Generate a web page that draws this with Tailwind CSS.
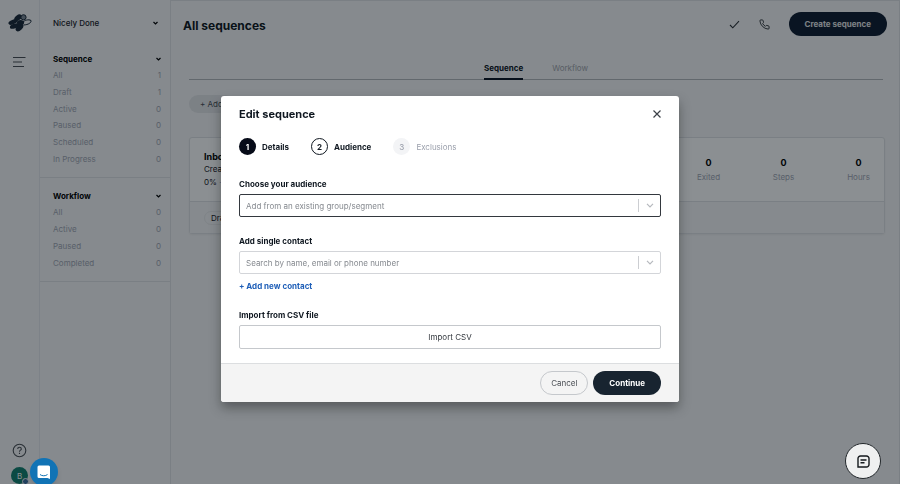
<!DOCTYPE html>
<html lang="en">
<head>
  <meta charset="UTF-8" />
  <meta name="viewport" content="width=device-width, initial-scale=1.0" />
  <title>All sequences</title>
  <script src="https://cdn.jsdelivr.net/npm/@tailwindcss/browser@4"></script>
</head>
<body class="bg-[#f6f6f7] font-['Inter',sans-serif] text-[8px] leading-3 text-[#1a2028]">

<div class="flex h-screen overflow-hidden">

  <!-- Icon rail -->
  <nav class="flex w-10 shrink-0 flex-col items-center border-r border-[#e6e8ec] pt-[13px]">
    <a href="#" aria-label="Home">
      <svg class="h-[19px] w-6" viewBox="0 0 24 19" fill="#1a2838">
        <ellipse cx="10" cy="4.800" rx="4.200" ry="2.600" transform="rotate(-38 10 4.800)" />
        <ellipse cx="5" cy="9" rx="4.800" ry="2.200" transform="rotate(-22 5 9)" />
        <ellipse cx="6.500" cy="13" rx="4.800" ry="2.300" transform="rotate(-20 6.500 13)" />
        <ellipse cx="11.500" cy="14.500" rx="4.600" ry="2.800" transform="rotate(-45 11.500 14.500)" />
        <ellipse cx="12.500" cy="9.500" rx="3.600" ry="2.600" />
        <circle cx="15.500" cy="4.300" r="2.600" fill="#7c8794" stroke="#1a2838" stroke-width="1" />
        <path d="M14.500 9.500c2-2.300 6-3.500 8.500-2 .6 2-2.500 4.300-7.500 4.500" fill="none" stroke="#1a2838" stroke-width="1" />
      </svg>
    </a>
    <button type="button" aria-label="Toggle menu" class="mt-6">
      <svg class="h-3 w-[13px]" viewBox="0 0 13 12" fill="none" stroke="#4b4f55" stroke-width="1.200">
        <path d="M0 1.500h12.500M0 6h9M0 10.500h11" />
      </svg>
    </button>
    <div class="mt-auto flex flex-col items-center gap-[9px]">
      <a href="#" aria-label="Help">
        <svg class="size-[15px]" viewBox="0 0 15 15" fill="none" stroke="#4b4f55" stroke-width="1.100">
          <circle cx="7.500" cy="7.500" r="6.300" />
          <path d="M5.700 6c0-1.100.8-1.800 1.800-1.800s1.800.7 1.800 1.700c0 1.300-1.800 1.300-1.800 2.800M7.500 9.800v1.200" />
        </svg>
      </a>
      <button type="button" class="relative size-[17px] rounded-full bg-[#14806f] text-[8px] text-white">B
        <span class="absolute -right-px -bottom-px size-[7px] rounded-full border border-[#f6f6f7] bg-[#3c6da0]"></span>
      </button>
    </div>
  </nav>

  <!-- Sidebar -->
  <aside class="w-[131px] shrink-0 border-r border-[#e0e2e6] text-[#a2a7b4]">
    <button type="button" class="flex w-full items-center justify-between pt-[17px] pr-3 pl-[13px] text-[#1a2028]">
      <span class="font-medium">Nicely Done</span>
      <svg class="h-1 w-[5px]" viewBox="0 0 5 4" fill="none" stroke="#000" stroke-width="1.200"><path d="M.5 1l2 2 2-2" /></svg>
    </button>

    <section class="mt-6 border-b border-[#e0e2e6] pr-[9px] pb-3 pl-[13px]">
      <button type="button" class="flex w-full items-center justify-between font-bold text-black">
        <span>Sequence</span>
        <svg class="h-1 w-[5px]" viewBox="0 0 5 4" fill="none" stroke="#000" stroke-width="1.200"><path d="M.5 1l2 2 2-2" /></svg>
      </button>
      <ul class="mt-1 flex h-24 flex-col justify-between">
        <li class="flex justify-between"><a href="#">All</a><span>1</span></li>
        <li class="flex justify-between"><a href="#">Draft</a><span>1</span></li>
        <li class="flex justify-between"><a href="#">Active</a><span>0</span></li>
        <li class="flex justify-between"><a href="#">Paused</a><span>0</span></li>
        <li class="flex justify-between"><a href="#">Scheduled</a><span>0</span></li>
        <li class="flex justify-between"><a href="#">In Progress</a><span>0</span></li>
      </ul>
    </section>

    <section class="border-b border-[#e0e2e6] pt-3 pr-[9px] pb-3 pl-[13px]">
      <button type="button" class="flex w-full items-center justify-between font-bold text-black">
        <span>Workflow</span>
        <svg class="h-1 w-[5px]" viewBox="0 0 5 4" fill="none" stroke="#000" stroke-width="1.200"><path d="M.5 1l2 2 2-2" /></svg>
      </button>
      <ul class="mt-1 flex h-[63px] flex-col justify-between">
        <li class="flex justify-between"><a href="#">All</a><span>0</span></li>
        <li class="flex justify-between"><a href="#">Active</a><span>0</span></li>
        <li class="flex justify-between"><a href="#">Paused</a><span>0</span></li>
        <li class="flex justify-between"><a href="#">Completed</a><span>0</span></li>
      </ul>
    </section>
  </aside>

  <!-- Page content -->
  <main class="min-w-0 flex-1 border-t border-r border-[#e0e2e6]">
    <header class="flex items-center justify-between pt-[11px] pr-3 pl-3">
      <h1 class="pt-1 text-[12px] leading-4 font-bold text-[#0f1720]">All sequences</h1>
      <div class="flex items-center">
        <button type="button" aria-label="Tasks">
          <svg class="size-[11px]" viewBox="0 0 11 11" fill="none" stroke="#2b3036" stroke-width="1.100"><path d="M1 6l2.800 2.800L10 2.200" /></svg>
        </button>
        <button type="button" aria-label="Call" class="ml-[19px]">
          <svg class="size-[11px]" viewBox="0 0 24 24" fill="none" stroke="#2b3036" stroke-width="2"><path d="M22 17v3a2 2 0 0 1-2.200 2A19.800 19.800 0 0 1 2 4.200 2 2 0 0 1 4 2h3a2 2 0 0 1 2 1.700c.1 1 .4 1.900.7 2.800a2 2 0 0 1-.5 2.100L8 9.900a16 16 0 0 0 6 6l1.300-1.300a2 2 0 0 1 2.100-.4c.9.300 1.900.5 2.800.6A2 2 0 0 1 22 17z" /></svg>
        </button>
        <button type="button" class="ml-[19px] h-6 rounded-full bg-[#101c30] px-4 font-bold text-[#e4e6e8]">Create sequence</button>
      </div>
    </header>

    <div class="mt-[26px] mr-4 ml-[18px] flex justify-center gap-[29px] border-b border-[#b4b7bb]">
      <a href="#" class="-mb-px border-b-2 border-[#0b1322] pb-1 font-bold text-[#0b1322]">Sequence</a>
      <a href="#" class="text-[#a2a5ac]">Workflow</a>
    </div>

    <div class="mt-[15px] mr-3.5 ml-[18px]">
      <button type="button" class="h-[18px] rounded-full bg-[#e4e5e8] px-[11px] text-[#4b4f55]">+ Add</button>

      <article class="mt-6 rounded-[3px] border border-[#e0e2e6] bg-white shadow-xs">
        <div class="flex h-16 items-center justify-between border-b border-[#e0e2e6] pl-3.5">
          <div>
            <h2 class="text-[9px] leading-[13px] font-bold text-black">Inbox</h2>
            <p class="leading-[13px]">Created</p>
            <p class="leading-[13px]">0% <span class="text-[#a2a7b4]">·</span></p>
          </div>
          <dl class="-mr-3 flex text-center text-[#a2a7b4]">
            <div class="flex w-[75px] flex-col-reverse"><dt>Exited</dt><dd class="mb-0.5 text-[9px] font-bold text-black">0</dd></div>
            <div class="flex w-[75px] flex-col-reverse"><dt>Steps</dt><dd class="mb-0.5 text-[9px] font-bold text-black">0</dd></div>
            <div class="flex w-[75px] flex-col-reverse"><dt>Hours</dt><dd class="mb-0.5 text-[9px] font-bold text-black">0</dd></div>
          </dl>
        </div>
        <div class="flex h-[31px] items-center bg-[#f6f6f7] pl-3.5">
          <span class="rounded-full border border-[#e8e9eb] px-1.5">Draft</span>
        </div>
      </article>
    </div>
  </main>
</div>

<!-- Edit sequence dialog -->
<div class="fixed inset-0 flex items-start justify-center bg-[#030b12]/46 pt-24">
  <form role="dialog" aria-labelledby="dialog-title" class="w-[458px] max-w-full overflow-hidden rounded-[3px] bg-white text-[#0f1720] shadow-[0_6px_12px_rgb(0_0_0/0.35)]">
    <div class="px-[18px] pt-2.5 pb-3.5">
      <div class="flex items-center justify-between">
        <h2 id="dialog-title" class="text-[11px] leading-4 font-bold">Edit sequence</h2>
        <button type="button" aria-label="Close" class="-mr-0.5 p-0.5">
          <svg class="size-2" viewBox="0 0 8 8" fill="none" stroke="#3c4147" stroke-width="1.200"><path d="M.5.5l7 7M7.500.5l-7 7" /></svg>
        </button>
      </div>

      <ol class="mt-4 flex items-center gap-[22px] font-bold">
        <li class="flex items-center gap-1.5"><span class="flex size-[17px] items-center justify-center rounded-full bg-[#060b18] text-white">1</span>Details</li>
        <li class="flex items-center gap-1.5"><span class="flex size-[17px] items-center justify-center rounded-full border border-[#0f1720]">2</span>Audience</li>
        <li class="flex items-center gap-1.5 font-normal text-[#9a9fab]"><span class="flex size-[17px] items-center justify-center rounded-full bg-[#f3f4f6] font-medium">3</span>Exclusions</li>
      </ol>

      <label for="audience" class="mt-[23px] block font-bold">Choose your audience</label>
      <div class="relative mt-1">
        <select id="audience" class="h-[23px] w-full appearance-none rounded-[2px] border border-[#33383e] bg-white px-1.5 text-[#85898f]">
          <option>Add from an existing group/segment</option>
        </select>
        <span class="pointer-events-none absolute inset-y-[5px] right-0 flex w-[23px] items-center justify-center border-l border-[#ccced2]">
          <svg class="h-[5px] w-2" viewBox="0 0 8 5" fill="none" stroke="#b6b9be" stroke-width="1.200"><path d="M1 .8l3 3 3-3" /></svg>
        </span>
      </div>

      <label for="contact" class="mt-[18px] block font-bold">Add single contact</label>
      <div class="relative mt-1">
        <select id="contact" class="h-[23px] w-full appearance-none rounded-[2px] border border-[#d3d5d9] bg-white px-1.5 text-[#85898f]">
          <option>Search by name, email or phone number</option>
        </select>
        <span class="pointer-events-none absolute inset-y-[5px] right-0 flex w-[23px] items-center justify-center border-l border-[#ccced2]">
          <svg class="h-[5px] w-2" viewBox="0 0 8 5" fill="none" stroke="#b6b9be" stroke-width="1.200"><path d="M1 .8l3 3 3-3" /></svg>
        </span>
      </div>
      <a href="#" class="mt-1.5 block w-fit font-bold text-[#1f5fb8]">+ Add new contact</a>

      <h3 id="csv-label" class="mt-[17px] font-bold">Import from CSV file</h3>
      <button type="button" aria-describedby="csv-label" class="mt-1 h-6 w-full rounded-[2px] border border-[#c5c8cc] text-[#33383e]">Import CSV</button>
    </div>

    <div class="flex justify-end gap-[5px] border-t border-[#dcdee0] bg-[#f4f4f4] px-[18px] py-[7px]">
      <button type="button" class="h-6 rounded-full border border-[#c5c8cc] px-2.5 text-[#4b4f55]">Cancel</button>
      <button type="submit" class="h-6 rounded-full bg-[#182430] px-4 font-bold text-white">Continue</button>
    </div>
  </form>
</div>

<!-- Floating chat launchers -->
<button type="button" aria-label="Open messenger" class="fixed -bottom-0.5 left-[30px] flex size-7 items-center justify-center rounded-full bg-[#1173b5] shadow-md">
  <svg class="size-3.5" viewBox="0 0 14 14">
    <path d="M2 .5h9.500A1.500 1.500 0 0 1 13 2v12l-2.500-1H2A1.500 1.500 0 0 1 .5 11.500V2A1.500 1.500 0 0 1 2 .5z" fill="#fff" />
    <path d="M3 9.500c2 1.700 5.500 1.700 7.500 0" fill="none" stroke="#1173b5" stroke-width="1" />
  </svg>
</button>
<button type="button" aria-label="Open notes" class="fixed right-[19px] bottom-[5px] flex size-9 items-center justify-center rounded-full border border-[#22272b] bg-[#eff0f0]">
  <svg class="size-[13px]" viewBox="0 0 13 13" fill="none" stroke="#15191c" stroke-width="1.400">
    <path d="M3.500 1h6A2.500 2.500 0 0 1 12 3.500v6A2.500 2.500 0 0 1 9.500 12H1V3.500A2.500 2.500 0 0 1 3.500 1zM3.500 5h6M3.500 7.700h4" />
  </svg>
</button>

</body>
</html>
